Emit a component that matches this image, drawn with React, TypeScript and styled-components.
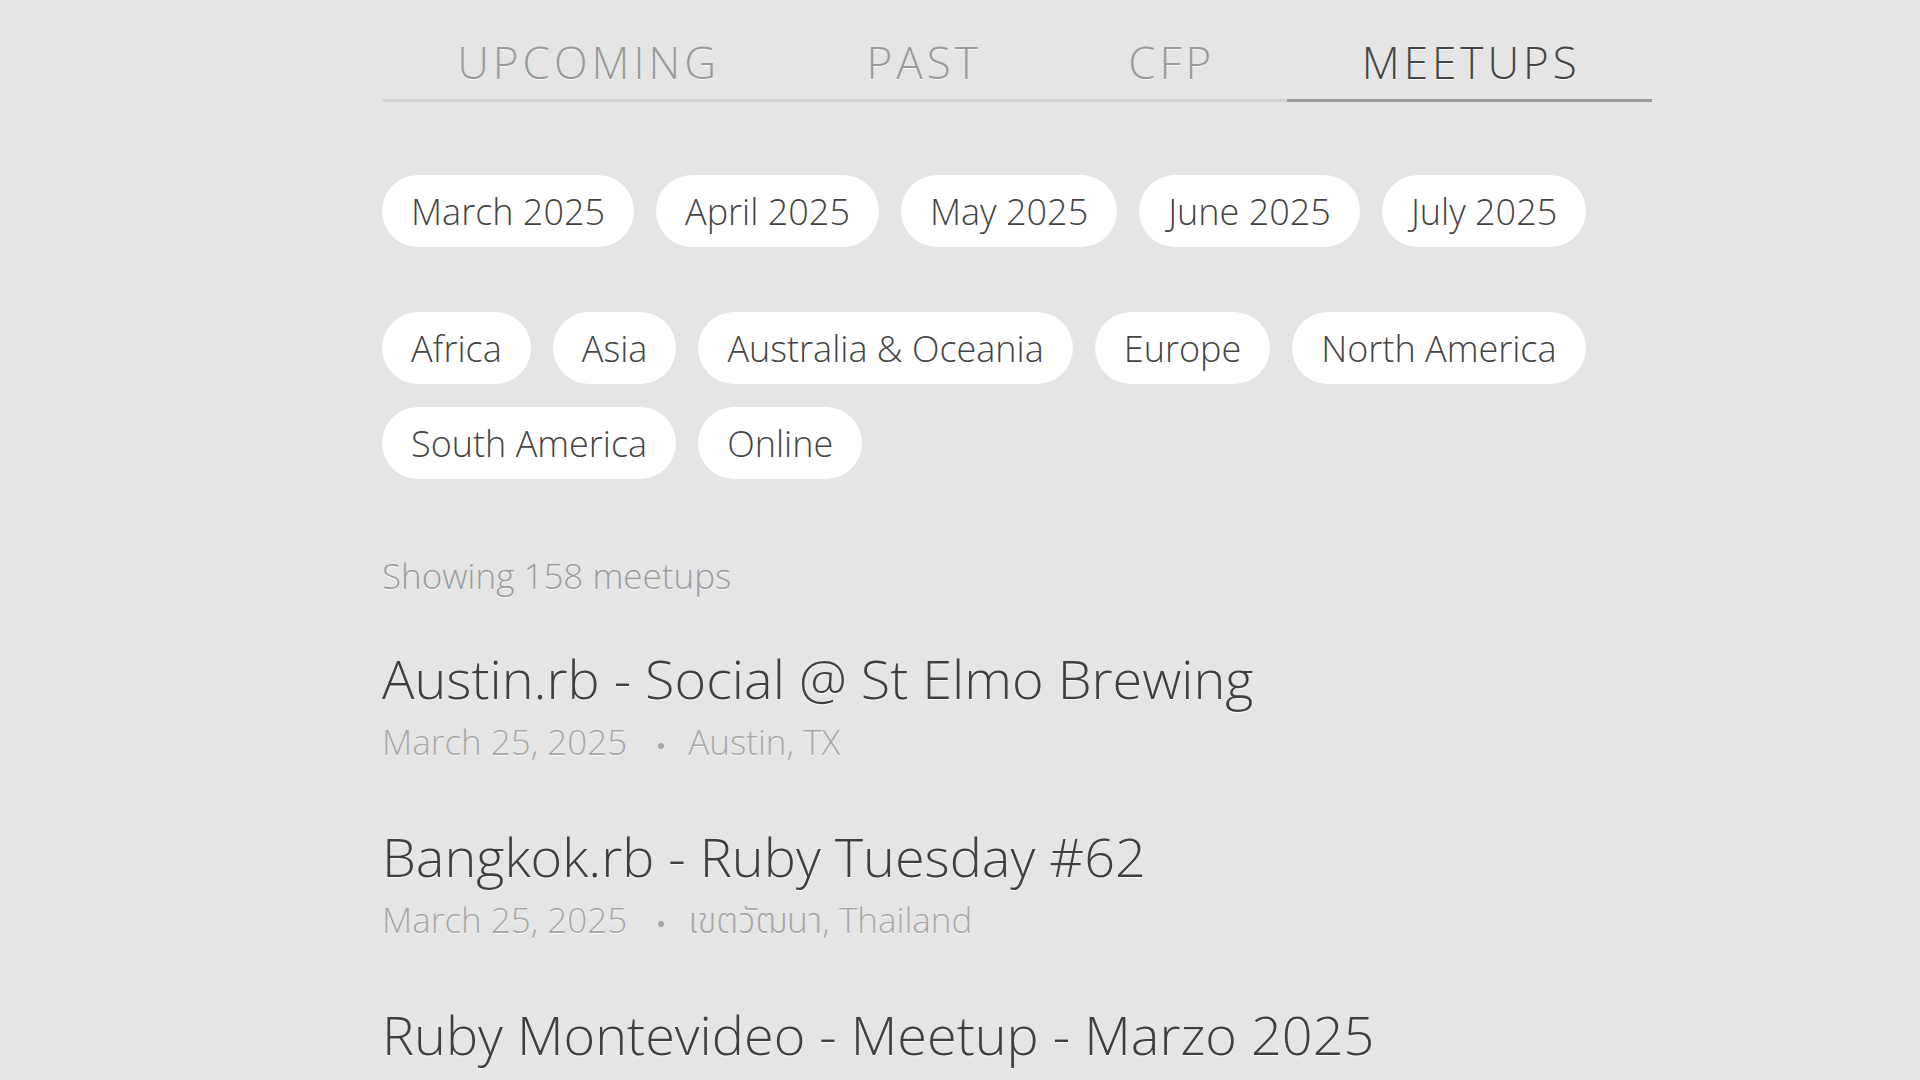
import styled, { createGlobalStyle } from "styled-components";

const GlobalStyle = createGlobalStyle`
  body {
    margin: 0;
    background: #e5e5e5;
    font-family: "Open Sans", "Noto Sans Thai", "Noto Sans", sans-serif;
    font-weight: 300;
    color: #444;
  }
`;

const tabs = ["Upcoming", "Past", "CFP", "Meetups"];
const months = ["March 2025", "April 2025", "May 2025", "June 2025", "July 2025"];
const regions = [
  "Africa",
  "Asia",
  "Australia & Oceania",
  "Europe",
  "North America",
  "South America",
  "Online",
];
const meetups = [
  { title: "Austin.rb - Social @ St Elmo Brewing", date: "March 25, 2025", place: "Austin, TX" },
  { title: "Bangkok.rb - Ruby Tuesday #62", date: "March 25, 2025", place: "เขตวัฒนา, Thailand" },
  { title: "Ruby Montevideo - Meetup - Marzo 2025", date: "March 26, 2025", place: "Montevideo, Uruguay" },
];

export default function App() {
  return (
    <>
      <GlobalStyle />
      <Page>
        <TabBar>
          {tabs.map((t) => (
            <Tab key={t} $active={t === "Meetups"}>
              {t}
            </Tab>
          ))}
        </TabBar>

        <PillGroup>
          {months.map((m) => (
            <Pill key={m}>{m}</Pill>
          ))}
        </PillGroup>

        <PillGroup $gapTop={65}>
          {regions.map((r) => (
            <Pill key={r}>{r}</Pill>
          ))}
        </PillGroup>

        <Count>Showing 158 meetups</Count>

        <List>
          {meetups.map((m) => (
            <Item key={m.title}>
              <Title>{m.title}</Title>
              <Meta>
                {m.date}
                <Dot />
                {m.place}
              </Meta>
            </Item>
          ))}
        </List>
      </Page>
    </>
  );
}

const Page = styled.main`
  width: 1270px;
  margin-left: 382px;
  padding-top: 40px;
  height: 1080px;
  box-sizing: border-box;
  overflow: hidden;
  text-shadow: 0 1px 0 rgba(255, 255, 255, 0.85);
`;

const TabBar = styled.nav`
  display: flex;
  border-bottom: 3px solid #d3d3d3;
`;

const Tab = styled.div<{ $active?: boolean }>`
  flex: 1 1 auto;
  text-align: center;
  font-size: 44px;
  line-height: 44px;
  font-stretch: 92%;
  letter-spacing: 4px;
  text-indent: 4px;
  text-transform: uppercase;
  color: ${(p) => (p.$active ? "#444" : "#999")};
  padding-bottom: 15px;
  margin-bottom: -3px;
  border-bottom: 3px solid ${(p) => (p.$active ? "#9a9a9a" : "transparent")};
`;

const PillGroup = styled.div<{ $gapTop?: number }>`
  display: flex;
  flex-wrap: wrap;
  gap: 23px 22px;
  margin-top: ${(p) => p.$gapTop ?? 73}px;
`;

const Pill = styled.button`
  display: inline-flex;
  align-items: center;
  height: 72px;
  padding: 0 29px;
  border: none;
  border-radius: 36px;
  background: #fff;
  font-family: inherit;
  font-weight: 330;
  font-size: 36px;
  color: #444;
  cursor: pointer;
`;

const Count = styled.p`
  margin: 79px 0 0;
  font-size: 35px;
  line-height: 1;
  font-weight: 360;
  color: #9a9a9a;
`;

const List = styled.div`
  display: flex;
  flex-direction: column;
  gap: 70px;
  margin-top: 58px;
`;

const Item = styled.article`
  display: flex;
  flex-direction: column;
  gap: 19px;
`;

const Title = styled.h2`
  margin: 0;
  font-size: 54px;
  line-height: 1;
  font-weight: 320;
  color: #3f3f3f;
  white-space: nowrap;
`;

const Meta = styled.div`
  font-size: 35px;
  line-height: 1;
  color: #a6a6a6;
  white-space: nowrap;
`;

const Dot = styled.span`
  display: inline-block;
  width: 6px;
  height: 6px;
  border-radius: 50%;
  background: #a6a6a6;
  vertical-align: middle;
  margin: 0 24px 0 31px;
`;
